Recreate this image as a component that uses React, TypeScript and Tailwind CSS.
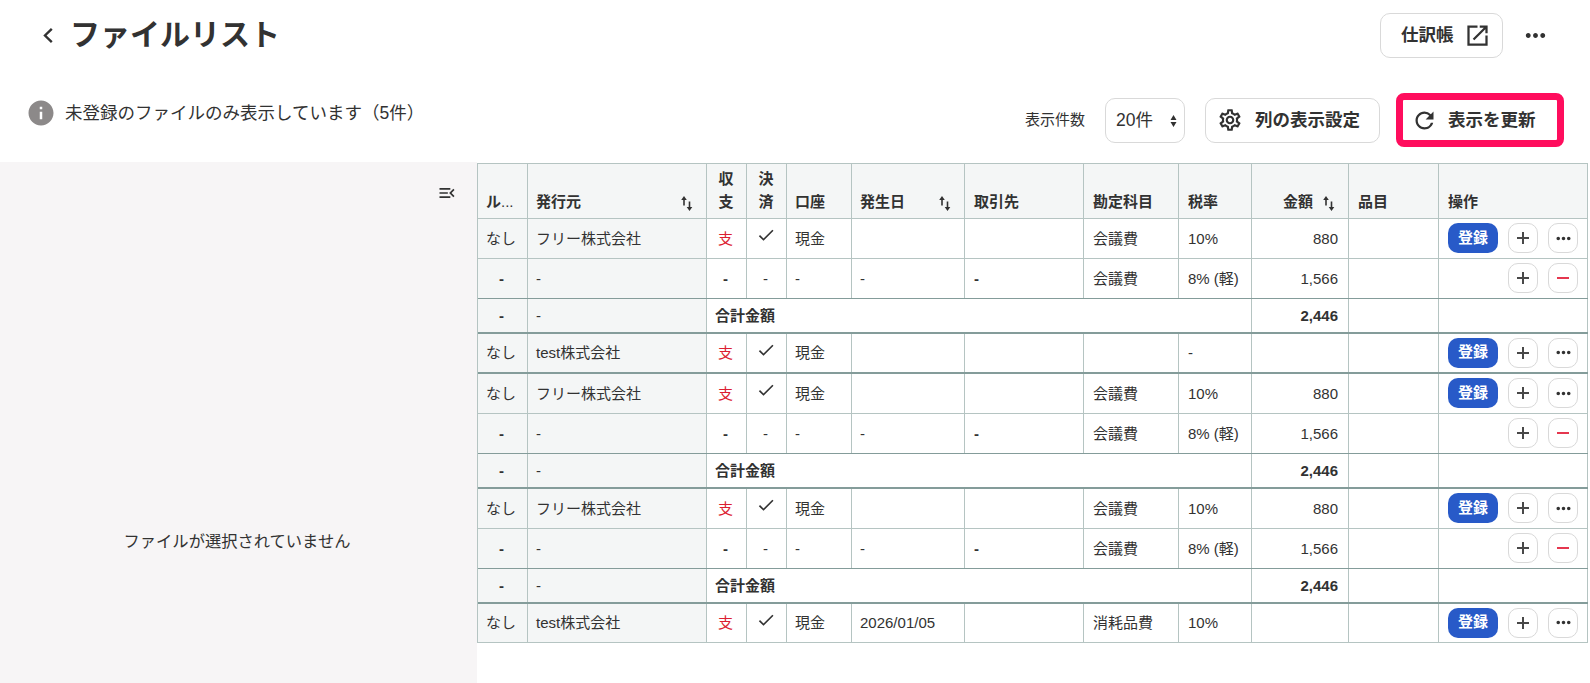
import React from 'react';
import clsx from 'clsx';
import { MdCheck, MdInfo, MdMenuOpen, MdMoreHoriz, MdOutlineSettings, MdRefresh } from 'react-icons/md';

type RowKind = 'main' | 'sub' | 'total';

interface Row {
  kind: RowKind;
  issuer?: string;
  date?: string;
  account?: string;
  tax?: string;
  amount?: string;
  // last row of a receipt group
  groupEnd?: boolean;
}

const rows: Row[] = [
  { kind: 'main', issuer: 'フリー株式会社', account: '会議費', tax: '10%', amount: '880' },
  { kind: 'sub', account: '会議費', tax: '8% (軽)', amount: '1,566' },
  { kind: 'total', amount: '2,446', groupEnd: true },
  { kind: 'main', issuer: 'test株式会社', tax: '-', groupEnd: true },
  { kind: 'main', issuer: 'フリー株式会社', account: '会議費', tax: '10%', amount: '880' },
  { kind: 'sub', account: '会議費', tax: '8% (軽)', amount: '1,566' },
  { kind: 'total', amount: '2,446', groupEnd: true },
  { kind: 'main', issuer: 'フリー株式会社', account: '会議費', tax: '10%', amount: '880' },
  { kind: 'sub', account: '会議費', tax: '8% (軽)', amount: '1,566' },
  { kind: 'total', amount: '2,446', groupEnd: true },
  { kind: 'main', issuer: 'test株式会社', date: '2026/01/05', account: '消耗品費', tax: '10%' },
];

const GRID = 'grid grid-cols-[50px_179px_40px_40px_65px_113px_119px_95px_73px_97px_90px_149px]';

const SortIcon: React.FC = () => (
  <svg width="11" height="15" viewBox="0 0 11 15" className="mb-0.5 mr-[5px] shrink-0 overflow-visible">
    <path d="M3 3V9.5M8.5 5.5V12" fill="none" stroke="#323232" strokeWidth="1.6" />
    <path d="M3 0L5.8 4H0.2ZM8.5 15L11.3 11H5.7Z" fill="#323232" />
  </svg>
);

const OpenIcon: React.FC = () => (
  <svg width="27" height="27" viewBox="0 0 24 24" fill="currentColor">
    <path d="M19 19H5V5h7V3H3v18h18v-9h-2v7zM14 3v2h3.59l-9.83 9.83 1.41 1.41L19 6.41V10h2V3h-7z" />
  </svg>
);

interface CellProps {
  children?: React.ReactNode;
  className?: string;
  // cells left of 取引先 sit one pixel closer to their border
  tight?: boolean;
}

const Cell: React.FC<CellProps> = ({ children, className, tight }) => (
  <div
    className={clsx(
      'flex min-w-0 items-center border-r border-[#b5c4c2] pr-[10px] pt-px',
      tight ? 'pl-2' : 'pl-[9px]',
      className
    )}
  >
    {children}
  </div>
);

const HeadCell: React.FC<CellProps> = ({ children, className, tight }) => (
  <div
    className={clsx(
      'flex min-w-0 items-end border-r border-[#b5c4c2] pb-[5px] pr-[9px] font-bold leading-[23px]',
      tight ? 'pl-2' : 'pl-[9px]',
      className
    )}
  >
    {children}
  </div>
);

const SquareButton: React.FC<CellProps> = ({ children }) => (
  <button className="flex size-[30px] items-center justify-center rounded-[10px] border border-[#d9d9d9] bg-white">
    {children}
  </button>
);

const PlusIcon: React.FC = () => (
  <svg width="12" height="12" viewBox="0 0 12 12" stroke="#484848" strokeWidth="2">
    <path d="M6 0V12M0 6H12" />
  </svg>
);

const MinusIcon: React.FC = () => (
  <svg width="12" height="2" viewBox="0 0 12 2">
    <rect width="12" height="2" fill="#e5374f" />
  </svg>
);

const TableRow: React.FC<{ row: Row }> = ({ row }) => {
  const { kind } = row;
  const isMain = kind === 'main';

  return (
    <div
      className={clsx(
        GRID,
        kind === 'total' && 'h-[35px]',
        kind !== 'total' && (isMain && row.date ? 'h-[39px]' : 'h-10'),
        row.groupEnd && 'border-b-2 border-[#849c9a]',
        !row.groupEnd && kind === 'sub' && 'border-b border-[#849c9a]',
        !row.groupEnd && isMain && 'border-b border-[#b5c4c2]'
      )}
    >
      <Cell tight className={clsx('bg-[#f4f6f6]', !isMain && 'justify-center font-bold')}>
        {isMain ? 'なし' : '-'}
      </Cell>
      <Cell tight className="bg-[#f4f6f6]">
        {row.issuer ?? '-'}
      </Cell>
      {kind === 'total' ? (
        <Cell tight className="col-span-7 font-bold">
          合計金額
        </Cell>
      ) : (
        <>
          <Cell tight className={clsx('justify-center', isMain ? 'text-[#dc1e32]' : 'font-bold')}>
            {isMain ? '支' : '-'}
          </Cell>
          <Cell tight className="justify-center">
            {isMain ? <MdCheck size={20} className="mb-2 shrink-0" /> : '-'}
          </Cell>
          <Cell tight>{isMain ? '現金' : '-'}</Cell>
          <Cell tight>{isMain ? row.date : '-'}</Cell>
          <Cell className="font-bold">{isMain ? '' : '-'}</Cell>
          <Cell>{row.account}</Cell>
          <Cell className="whitespace-nowrap">{row.tax}</Cell>
        </>
      )}
      <Cell className={clsx('justify-end', kind === 'total' && 'font-bold')}>{row.amount}</Cell>
      <Cell />
      <div className="flex items-center justify-end gap-2.5 border-r border-[#b5c4c2] pb-px pr-[9px]">
        {isMain && (
          <button className="h-[30px] w-[50px] rounded-[10px] bg-[#285ac8] font-bold text-white">登録</button>
        )}
        {kind !== 'total' && (
          <>
            <SquareButton>
              <PlusIcon />
            </SquareButton>
            <SquareButton>{isMain ? <MdMoreHoriz size={21} className="shrink-0" /> : <MinusIcon />}</SquareButton>
          </>
        )}
      </div>
    </div>
  );
};

const App: React.FC = () => {
  return (
    <div className="flex h-[683px] w-[1590px] flex-col overflow-hidden bg-white font-['Liberation_Sans','Noto_Sans_CJK_JP',sans-serif] text-[15px] text-[#323232]">
      {/* Page title */}
      <header className="flex h-[71px] items-center pl-[43px] pr-10">
        <svg width="10" height="15" viewBox="0 0 10 15" fill="none" stroke="currentColor" strokeWidth="2.4">
          <path d="M8.8 0.9L2 7.5L8.8 14.1" />
        </svg>
        <h1 className="mb-0.5 ml-[17px] text-[30px] font-bold leading-none">ファイルリスト</h1>
        <button className="ml-auto flex h-[45px] w-[123px] items-center gap-2.5 rounded-[10px] border border-[#d9d9d9] pl-5 text-[17.5px] font-bold">
          仕訳帳
          <OpenIcon />
        </button>
        <MdMoreHoriz size={29} className="ml-[18px]" />
      </header>

      {/* Toolbar */}
      <div className="flex h-[91px] px-[26px]">
        <div className="flex h-[84px] items-center">
          <MdInfo size={30} className="text-[#8c8989]" />
          <span className="ml-[9px] text-[17.5px]">未登録のファイルのみ表示しています（5件）</span>
        </div>
        <div className="ml-auto mt-[22px] flex h-[54px] items-center">
          <span>表示件数</span>
          <button className="ml-5 flex h-[45px] w-20 items-center justify-between rounded-[10px] border border-[#d9d9d9] pl-2.5 pr-[7px] text-[17.5px]">
            20件
            <svg width="7" height="12" viewBox="0 0 7 12" fill="#323232" className="mt-px">
              <path d="M3.5 0L6.5 5H0.5ZM3.5 12L0.5 7H6.5Z" />
            </svg>
          </button>
          <button className="ml-5 flex h-[45px] w-[175px] items-center gap-3 rounded-[10px] border border-[#d9d9d9] pl-[11px] text-[17.5px] font-bold">
            <MdOutlineSettings size={26} />
            列の表示設定
          </button>
          <button className="ml-4 flex h-[54px] w-[168px] items-center gap-2.5 rounded-[8px] border-[7px] border-[#ff0d5d] pl-2 text-[17.5px] font-bold">
            <MdRefresh size={27} />
            表示を更新
          </button>
        </div>
      </div>

      <div className="flex min-h-0 flex-1">
        {/* File preview */}
        <aside className="relative flex w-[477px] items-center justify-center bg-[#f7f5f6] pr-[3px]">
          <MdMenuOpen size={20} className="absolute right-5 top-[21px]" />
          <p className="mt-[238px] text-[16.3px]">ファイルが選択されていません</p>
        </aside>

        {/* File table */}
        <div className="mt-px w-[1111px] self-start border-l border-t border-[#b5c4c2]">
          <div className={clsx(GRID, 'h-[55px] border-b border-[#b5c4c2] bg-[#f4f6f6]')}>
            <HeadCell tight>
              <span className="whitespace-nowrap">
                ル<span className="font-normal">...</span>
              </span>
            </HeadCell>
            <HeadCell tight className="justify-between">
              発行元
              <SortIcon />
            </HeadCell>
            <HeadCell tight className="justify-center">
              <span className="w-[15px]">収支</span>
            </HeadCell>
            <HeadCell tight className="justify-center">
              <span className="w-[15px]">決済</span>
            </HeadCell>
            <HeadCell tight>口座</HeadCell>
            <HeadCell tight className="justify-between">
              発生日
              <SortIcon />
            </HeadCell>
            <HeadCell>取引先</HeadCell>
            <HeadCell>勘定科目</HeadCell>
            <HeadCell>税率</HeadCell>
            <HeadCell className="justify-end gap-2.5">
              金額
              <SortIcon />
            </HeadCell>
            <HeadCell>品目</HeadCell>
            <HeadCell>操作</HeadCell>
          </div>
          {rows.map((row, index) => (
            <TableRow key={index} row={row} />
          ))}
        </div>
      </div>
    </div>
  );
};

export default App;
